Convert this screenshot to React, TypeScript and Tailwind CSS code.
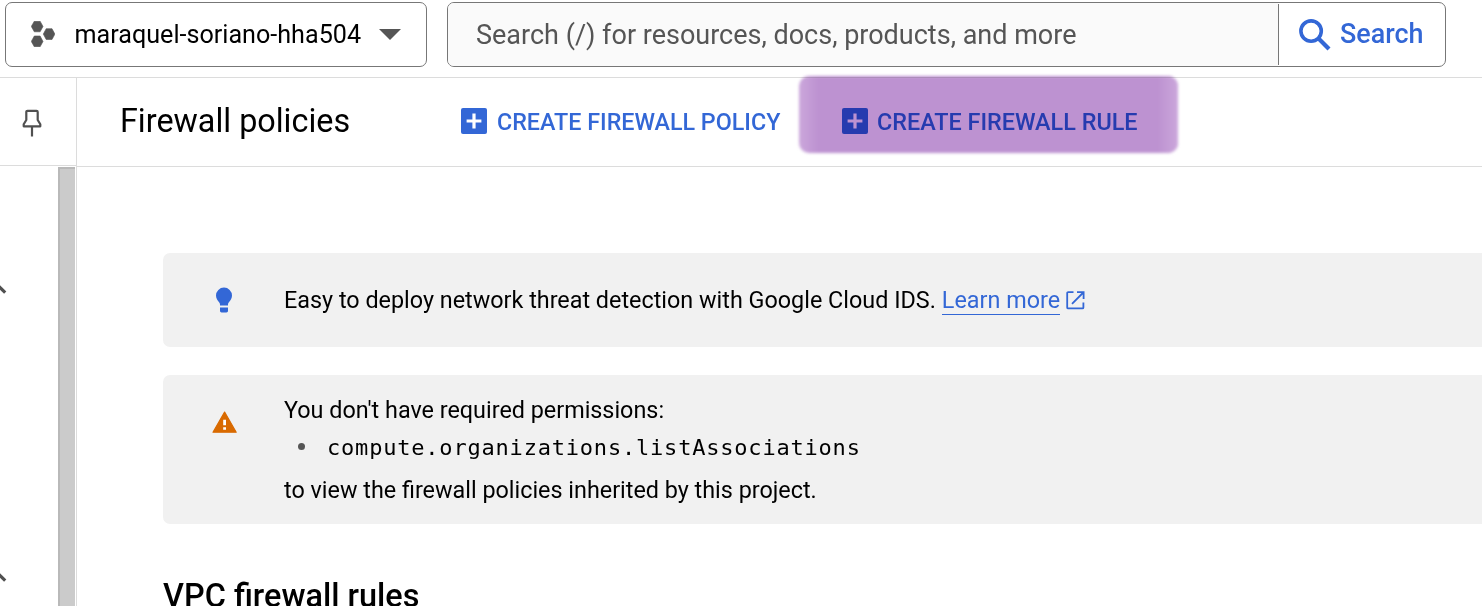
import React from "react";

function ProjectIcon() {
  return (
    <svg width="24" height="26" viewBox="0 0 24 26" fill="#555" className="mb-[2px] shrink-0">
      <path d="M3.300 .2h5.800L12 5.400l-2.900 5.400H3.300L.3 5.400z" stroke="#555" strokeWidth=".6" />
      <path d="M15.200 7.700H21l2.900 5.400-2.900 5.400h-5.800l-2.900-5.400z" stroke="#555" strokeWidth=".6" />
      <path d="M3.300 15h5.800l2.900 5.400-2.900 5.400H3.300L.3 20.400z" stroke="#555" strokeWidth=".6" />
    </svg>
  );
}

function PinIcon() {
  return (
    <svg width="20" height="28" viewBox="0 0 20 28" fill="none" stroke="#505050" strokeWidth="2.200">
      <path d="M4.300 3a1.200 1.200 0 0 1 1.200-1.200h9a1.200 1.200 0 0 1 1.200 1.200v8l2.600 4.300v2H1.700v-2L4.300 11z" strokeLinejoin="round" />
      <path d="M10 17.300v10.200" />
    </svg>
  );
}

function PlusBox({ plus }: { plus: string }) {
  return (
    <svg width="26" height="26" viewBox="0 0 26 26" className="mb-[2px] shrink-0">
      <rect width="26" height="26" rx="2" fill="#3367d6" />
      <path d="M13 5.600v14.800M5.600 13h14.800" stroke={plus} strokeWidth="3.200" />
    </svg>
  );
}

function SearchIcon() {
  return (
    <svg width="32" height="32" viewBox="0 0 32 32" fill="none" stroke="#3367d6" className="shrink-0">
      <circle cx="12.100" cy="12.100" r="10.200" strokeWidth="3.600" />
      <path d="M19.300 19.300L30 30" strokeWidth="4.200" />
    </svg>
  );
}

function BulbIcon() {
  return (
    <svg width="16" height="26" viewBox="0 0 16 26" fill="#3367d6">
      <path d="M8 .6a8 8 0 0 0-8 8c0 3 1.600 5 2.900 6.500.8.9 1.100 1.600 1.100 2.600v.7h8v-.7c0-1 .3-1.700 1.100-2.600C14.400 13.600 16 11.600 16 8.600a8 8 0 0 0-8-8z" />
      <path d="M4 20.400h8v3.400c0 1-.6 1.600-1.600 1.600H5.600c-1 0-1.600-.6-1.600-1.600z" />
    </svg>
  );
}

function WarningIcon() {
  return (
    <svg width="26" height="23" viewBox="0 0 26 23">
      <path d="M12.600 1.100L24.200 21.200H1z" fill="#d96a00" stroke="#d96a00" strokeWidth="1.200" strokeLinejoin="round" />
      <path d="M11.200 8.700H14v5.600h-2.800zM11.200 16.200H14v2.600h-2.800z" fill="#fff" />
    </svg>
  );
}

function ExternalIcon() {
  return (
    <svg width="19" height="19" viewBox="0 0 19 19" fill="none" stroke="#3367d6" strokeWidth="1.800">
      <path d="M7.500 1.200H2.200a1 1 0 0 0-1 1v14.200a1 1 0 0 0 1 1h14.200a1 1 0 0 0 1-1V11.500" />
      <path d="M11 1.200h6.600V8M17.300 1.500L6 12.800" />
    </svg>
  );
}

function Chevron() {
  return (
    <svg width="7" height="13" viewBox="0 0 7 13" className="block">
      <path d="M-4 -.5L5.200 8.700" stroke="#505050" strokeWidth="3.200" fill="none" />
    </svg>
  );
}

export default function App() {
  return (
    <div className="flex h-[606px] w-[1482px] flex-col overflow-hidden bg-white font-['Roboto','Liberation_Sans',sans-serif] text-black">
      <header className="flex h-[78px] shrink-0 border-b border-[#dcdcdc] pt-[2px] pl-[5px]">
        <div className="flex h-[65px] w-[422px] items-center rounded-[7px] border border-[#777] pl-[25px]">
          <ProjectIcon />
          <span className="ml-[19.500px] w-[304.500px] pt-px text-[25.150px] whitespace-nowrap">maraquel-soriano-hha504</span>
          <svg width="22" height="11" viewBox="0 0 22 11"><path d="M0 0h22L11 11z" fill="#555" /></svg>
        </div>
        <div className="ml-[20px] flex h-[65px] w-[999px] items-center overflow-hidden rounded-[7px] border border-[#777]">
          <div className="flex h-full w-[830px] items-center bg-[#fafafa] pt-px pl-[28px] text-[27px] whitespace-nowrap text-[#555]">
            <span>Search (/) for resources, docs, products, and more</span>
          </div>
          <div className="flex h-[61px] flex-1 items-center border-l border-[#777] pl-[20px]">
            <SearchIcon />
            <span className="ml-[9px] text-[26.900px] font-medium text-[#3367d6]">Search</span>
          </div>
        </div>
      </header>
      <div className="flex min-h-0 flex-1">
        <aside className="flex w-[77px] shrink-0 flex-col border-r border-[#dcdcdc]">
          <div className="flex h-[88px] shrink-0 items-center border-b border-[#dcdcdc] pt-[2px] pl-[22px]">
            <PinIcon />
          </div>
          <div className="mt-px flex flex-1 justify-between pr-px">
            <div className="flex flex-col gap-[275px] pt-[117px]">
              <Chevron />
              <Chevron />
            </div>
            <div className="w-[17px] border-t-2 border-l-2 border-[#b9b9b9] bg-[#cbcbcb]" />
          </div>
        </aside>
        <main className="flex min-w-0 flex-1 flex-col">
          <div className="flex h-[89px] shrink-0 items-center border-b border-[#dcdcdc] pl-[43px]">
            <h1 className="w-[341px] pb-px text-[32.350px] whitespace-nowrap">Firewall policies</h1>
            <div className="flex w-[338px] items-center gap-[10px]">
              <PlusBox plus="#fff" />
              <span className="pb-px text-[23.300px] leading-[34px] font-medium whitespace-nowrap text-[#3367d6]">CREATE FIREWALL POLICY</span>
            </div>
            <div className="relative flex h-[77px] w-[379px] items-center gap-[9px] pl-[43px]">
              <PlusBox plus="#fff" />
              <span className="pb-px text-[23.400px] leading-[34px] font-medium whitespace-nowrap text-[#3367d6]">CREATE FIREWALL RULE</span>
              <div className="absolute -top-[8px] left-0 h-[77px] w-[379px] rounded-[10px] bg-linear-to-r from-[#cba7db] via-[#bd92d1] via-5% to-[#bd92d1] mix-blend-multiply blur-[1.500px]">
                <div className="ml-auto h-full w-[20px] rounded-r-[10px] bg-linear-to-r from-[#bd92d1] to-[#cba7db]" />
              </div>
            </div>
          </div>
          <div className="flex flex-col pt-[86px] pl-[86px]">
            <section className="flex h-[94px] items-center rounded-l-[7px] bg-[#f1f1f1] pl-[53px]">
              <div className="w-[68px]"><BulbIcon /></div>
              <p className="flex items-center pt-px text-[23.370px] leading-[28px] whitespace-nowrap">
                <span className="pb-[2px]">Easy to deploy network threat detection with Google Cloud IDS.</span>
                <a className="ml-[6px] border-b border-[#3367d6] text-[#3367d6]">Learn more</a>
                <span className="ml-[6px]"><ExternalIcon /></span>
              </p>
            </section>
            <section className="mt-[28px] flex h-[149px] rounded-l-[7px] bg-[#f1f1f1] pl-[49px]">
              <div className="w-[72px] pt-[36px]"><WarningIcon /></div>
              <div className="pt-[18px] text-[23.370px] leading-[34px] whitespace-nowrap">
                <p>You don't have required permissions:</p>
                <div className="flex h-[40px] items-center">
                  <span className="mb-[2px] ml-[14px] size-[7px] rounded-full bg-[#555]" />
                  <code className="ml-[22px] pt-[2px] font-['DejaVu_Sans_Mono',monospace] text-[22px] tracking-[0.800px]">compute.organizations.listAssociations</code>
                </div>
                <p className="mt-[6px]">to view the firewall policies inherited by this project.</p>
              </div>
            </section>
            <h2 className="mt-[52px] text-[32.450px] leading-[40px] font-medium whitespace-nowrap">VPC firewall rules</h2>
          </div>
        </main>
      </div>
    </div>
  );
}
